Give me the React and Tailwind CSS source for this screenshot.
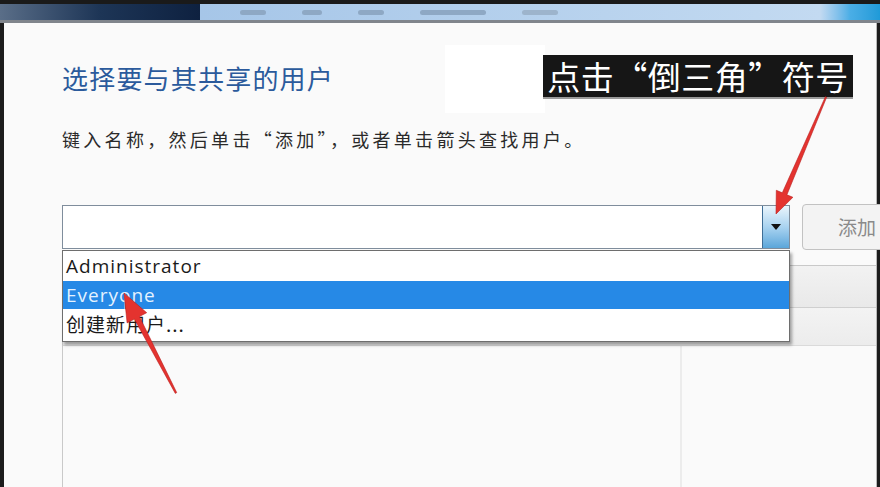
import React from 'react';

const cjk = { fontFamily: '"Noto Sans CJK SC", "Noto Sans", sans-serif' };
const latin = { fontFamily: '"Open Sans", "Noto Sans CJK SC", sans-serif' };

const RedArrow = ({ points }) => (
    <polygon points={points} fill="#e4332f" stroke="#b81f1f" strokeWidth="0.6" strokeLinejoin="round" />
);

const TitleBar = () => (
    <div className="h-[16px] flex">
        <div className="w-[200px] bg-gradient-to-r from-[#5a6e88] via-[#1d3556] to-[#0e2140]" />
        <div className="flex-1 flex items-center gap-[36px] pl-[40px] bg-gradient-to-r from-[#a6c6e8] to-[#c3daf1]">
            <div className="w-[26px] h-[5px] rounded bg-[#8ea8c4]" />
            <div className="w-[20px] h-[5px] rounded bg-[#8ea8c4]" />
            <div className="w-[26px] h-[5px] rounded bg-[#8ea8c4]" />
            <div className="w-[66px] h-[5px] rounded bg-[#8ea8c4]" />
            <div className="w-[36px] h-[5px] rounded bg-[#9db4cc]" />
        </div>
        <div className="w-[60px] bg-gradient-to-r from-[#c3daf1] via-[#4aaee6] to-[#1e9ad8]" />
    </div>
);

const App = () => {
    return (
        <div className="relative w-[880px] h-[487px] overflow-hidden bg-[#1c1c1c]">
            <div className="h-[4px] bg-[#1a1a1a]" />
            <TitleBar />
            <div className="h-[3px] bg-[#80858c]" />

            <div className="ml-[4px] mr-[3px] h-[464px] bg-[#fafafa] border-r border-[#b8b8b8] pl-[58px] flex flex-col">
                <h1 className="mt-[38px] text-[26px] leading-[34px] text-[#2b5a9c] tracking-[1.2px]" style={cjk}>
                    选择要与其共享的用户
                </h1>
                <p className="mt-[32px] text-[18px] leading-[24px] text-[#2a2a2a] tracking-[3.3px]" style={cjk}>
                    键入名称，然后单击“添加”，或者单击箭头查找用户。
                </p>

                {/* combo + add button */}
                <div className="mt-[54px] flex items-start gap-[12px]">
                    <div className="w-[728px] shrink-0 h-[44px] flex border border-[#7f8d9c] bg-white">
                        <div className="flex-1" />
                        <div className="w-[27px] flex items-center justify-center border-l border-[#3f6e96] bg-gradient-to-b from-[#eaf5fc] via-[#a9d3f0] to-[#5aa6da]">
                            <svg width="10" height="6" viewBox="0 0 10 6">
                                <path d="M0 0 H10 L5 6 Z" fill="#111" />
                            </svg>
                        </div>
                    </div>
                    <div className="w-[120px] shrink-0 h-[46px] -mt-[1px] flex items-center pl-[35px] rounded-[4px] border border-[#c2c2c2] bg-[#f3f3f3] text-[19px] text-[#8a8a8a]" style={cjk}>
                        添加
                    </div>
                </div>

                {/* users list behind the dropdown */}
                <div className="mt-[15px] flex-1 flex flex-col border-l border-t border-[#c9c9c9] bg-[#fafafa]">
                    <div className="h-[42px] bg-gradient-to-b from-[#f2f2f2] to-[#e9e9e9] border-b border-[#cfcfcf]" />
                    <div className="h-[38px] bg-gradient-to-b from-[#f3f3f3] to-[#ececec] border-b border-[#dadada]" />
                    <div className="flex-1 flex">
                        <div className="w-[619px] border-r-2 border-[#ececec]" />
                        <div className="flex-1" />
                    </div>
                </div>
            </div>

            {/* white patch from the video frame */}
            <div className="absolute left-[445px] top-[45px] w-[100px] h-[68px] bg-white" />

            {/* caption */}
            <div className="absolute left-[543px] top-[55px] w-[310px] h-[42px] bg-[#161616] shadow-[0_2px_0_#9a9a9a] flex items-center justify-center">
                <span className="text-[33px] leading-none text-white tracking-[0.5px]" style={cjk}>点击“倒三角”符号</span>
            </div>

            {/* dropdown menu */}
            <div className="absolute left-[62px] top-[250px] w-[728px] h-[92px] bg-white border border-[#6e6e6e] shadow-[2px_3px_3px_rgba(0,0,0,0.35)] flex flex-col">
                <div className="h-[30px] flex items-center pl-[3px] text-[19px] tracking-[1px] text-[#1a1a1a]" style={latin}>Administrator</div>
                <div className="h-[28px] flex items-center pl-[3px] bg-[#2689e6] text-[19px] tracking-[1px] text-[#e4f2ff]" style={latin}>Everyone</div>
                <div className="h-[30px] flex items-center pl-[3px] text-[19px] tracking-[1px] text-[#1a1a1a]" style={cjk}>创建新用户...</div>
            </div>

            {/* annotations */}
            <svg className="absolute left-0 top-0 pointer-events-none" width="880" height="487" viewBox="0 0 880 487">
                <path d="M125 294 L125 310 L129 306 L132 313 L134 312 L131 305 L136 305 Z" fill="#111" stroke="#fff" strokeWidth="0.8" />
                <RedArrow points="826.6,97.3 786.9,194.8 792.9,197.3 776,214 776.3,190.3 782.3,192.8 825.4,96.7" />
                <RedArrow points="176.7,392.6 139.4,316.5 146.7,312.7 124,293 127.1,322.9 134.4,319.1 175.3,393.4" />
            </svg>
        </div>
    );
};

export default App;
